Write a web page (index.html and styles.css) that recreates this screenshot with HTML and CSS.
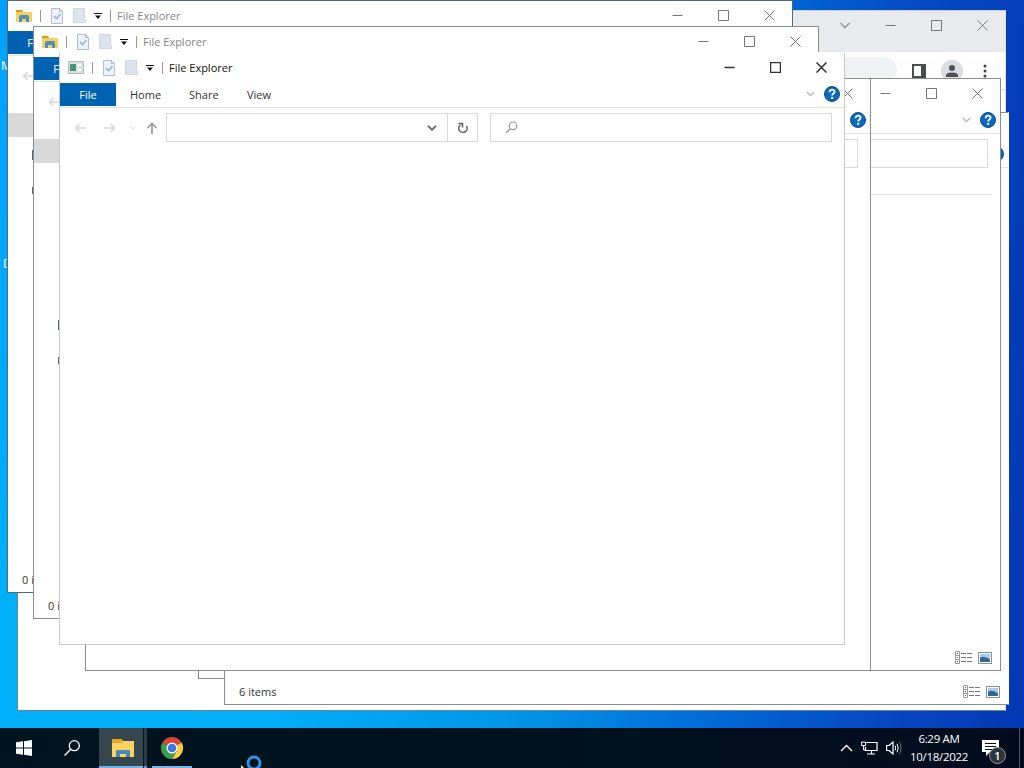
FILE: index.html
```html
<!DOCTYPE html>
<html lang="en">
<head>
  <meta charset="UTF-8">
  <title>Desktop</title>
  <link rel="stylesheet" href="styles.css">
</head>
<body>
  <!-- shared icons -->
  <svg class="defs">
    <symbol id="folder" viewBox="0 0 16 14">
      <path d="M0 1h6l1 2h9v10H0z" fill="#f8d05c"/>
      <path d="M0 1h6l1 2H0z" fill="#d39a20"/>
      <path d="M3 13V8q0-2 2-2h6q2 0 2 2v5h-3v-3H6v3z" fill="#4a8fc6"/>
    </symbol>
    <symbol id="app" viewBox="0 0 16 13">
      <rect x=".5" y=".5" width="15" height="12" fill="#dde1e1" stroke="#b3b9b9"/>
      <rect x="2" y="3" width="6" height="7" fill="#4b9276"/>
      <path d="M10 3h3v2h-2v3h2v2h-3z" fill="#fff"/>
    </symbol>
    <symbol id="props" viewBox="0 0 12 16">
      <path d="M.5.5h8l3 3v12H.5z" fill="#eef2fb" stroke="#b4bfd2"/>
      <path d="M8.500.5v3h3" fill="none" stroke="#b4bfd2"/>
      <path d="M3 8l2.500 2.500L9.500 6" fill="none" stroke="#9cb0d8" stroke-width="1.600"/>
    </symbol>
    <symbol id="newfolder" viewBox="0 0 13 15">
      <path d="M.5.5h11v10l1 1v3H.5z" fill="#dce3ef" stroke="#d0d7e2"/>
    </symbol>
    <symbol id="more" viewBox="0 0 8 6">
      <path d="M0 .5h8" stroke="#111"/><path d="M1 2.500h6L4 6z" fill="#111"/>
    </symbol>
    <symbol id="min" viewBox="0 0 11 11"><path d="M.5 5.500h10"/></symbol>
    <symbol id="max" viewBox="0 0 11 11"><path d="M.5.5h10v10H.5z"/></symbol>
    <symbol id="close" viewBox="0 0 11 11"><path d="M.5.5l10 10M10.500.5l-10 10"/></symbol>
    <symbol id="chev" viewBox="0 0 10 6"><path d="M1 .8l4 4 4-4"/></symbol>
    <symbol id="arrow" viewBox="0 0 12 10"><path d="M12 5H1.500M5.500 1l-4 4 4 4"/></symbol>
    <symbol id="help" viewBox="0 0 16 16">
      <circle cx="8" cy="8" r="7.500" fill="#0d68b8" stroke="#0a4f92"/>
      <path d="M5.600 6.200c0-3.400 5-3.200 5-.5 0 1.800-2.400 1.700-2.400 3.700" fill="none" stroke="#fff" stroke-width="1.800"/>
      <rect x="7.200" y="10.800" width="2" height="2" fill="#fff"/>
    </symbol>
    <symbol id="details" viewBox="0 0 17 13">
      <path d="M.5.5h4v12h-4zM.5 4.500h4M.5 8.500h4" fill="none" stroke="#999"/>
      <path d="M2 2.500h1M2 6.500h1M2 10.500h1" stroke="#555"/>
      <path d="M6 2.500h11M6 6.500h11M6 10.500h11" stroke="#777" stroke-dasharray="5 1"/>
    </symbol>
    <symbol id="thumbs" viewBox="0 0 14 12">
      <rect x=".5" y=".5" width="13" height="11" fill="#fff" stroke="#8393a3"/>
      <rect x="2" y="2" width="10" height="8" fill="#a9cbed"/>
      <path d="M2 5.500q5-2 10 2V10H2z" fill="#37688c"/>
    </symbol>
  </svg>

  <div class="desktop">
    <span class="desk-label label-m">M</span>
    <span class="desk-label label-d">D</span>

    <div class="window chrome">
      <div class="chrome-title">
        <svg class="chrome-chev" width="12" height="7"><use href="#chev"/></svg>
        <div class="controls">
          <span><svg><use href="#min"/></svg></span>
          <span><svg><use href="#max"/></svg></span>
          <span><svg><use href="#close"/></svg></span>
        </div>
      </div>
      <div class="chrome-bar">
        <div class="omnibox"></div>
        <svg class="panel" width="14" height="14" viewBox="0 0 14 14"><path d="M1 1h12v12H1z" fill="#fff" stroke="#4a4c50" stroke-width="2"/><path d="M9 0h5v14H9z" fill="#4a4c50"/></svg>
        <svg class="avatar" width="22" height="22" viewBox="0 0 22 22"><circle cx="11" cy="11" r="11" fill="#dadde1"/><circle cx="11" cy="8" r="3" fill="#4d5156"/><path d="M5 17v-1.500q0-3 6-3t6 3V17z" fill="#4d5156"/></svg>
        <svg class="menu" width="4" height="14" viewBox="0 0 4 14"><g fill="#444"><circle cx="2" cy="2" r="1.500"/><circle cx="2" cy="7" r="1.500"/><circle cx="2" cy="12" r="1.500"/></g></svg>
      </div>
    </div>

    <div id="windows"></div>

    <div class="taskbar">
      <div class="task"><svg width="16" height="16" viewBox="0 0 16 16"><path d="M0 2.300l7-1v6.200H0zM8 1.200L16 0v7.500H8zM0 8.500h7v6.200l-7-1zM8 8.500h8V16l-8-1.200z" fill="#fff"/></svg></div>
      <div class="task"><svg width="16" height="16" viewBox="0 0 16 16"><path d="M6.500 9.500L.5 15.500" stroke="#fff" stroke-width="1.400"/><circle cx="10.300" cy="5.700" r="5" fill="none" stroke="#fff" stroke-width="1.300"/></svg></div>
      <div class="task active"><svg width="22" height="19" viewBox="0 0 22 19"><path d="M0 0h9l2 2h11v16H0z" fill="#fad35e"/><path d="M0 0h9l2 2-2 2H0z" fill="#e3a829"/><path d="M4 18v-6q0-1 1-1h12q1 0 1 1v6h-4v-3H8v3z" fill="#4489bd"/></svg></div>
      <div class="stack"></div>
      <div class="task running"><svg width="22" height="22" viewBox="0 0 22 22">
        <path d="M11 11L1.470 5.500A11 11 0 0 1 20.530 5.500z" fill="#dc4437"/>
        <path d="M11 11l9.530-5.500A11 11 0 0 1 11 22l4.500-8z" fill="#fbcd43"/>
        <path d="M1.470 5.500A11 11 0 0 0 11 22l4.700-8.300L11 11z" fill="#3b9c4e"/>
        <circle cx="11" cy="11" r="5.500" fill="#fff"/><circle cx="11" cy="11" r="4.300" fill="#3f78e6"/></svg></div>
      <div class="tray">
        <svg width="13" height="8" viewBox="0 0 13 8"><path d="M1 7l5.500-5.500L12 7" fill="none" stroke="#fff" stroke-width="1.400"/></svg>
        <svg width="17" height="14" viewBox="0 0 17 14"><path d="M5 1.500h11v8H4.500V6M10.500 9.500v3M6 13h8" fill="none" stroke="#fff" stroke-width="1.200"/><path d="M.6 1.100h4v3.500h-4zM2.600 4.500V9h2" fill="none" stroke="#fff"/></svg>
        <svg width="16" height="14" viewBox="0 0 16 14"><path d="M.6 4.500H3l4-3.500v12L3 9.500H.6z" fill="none" stroke="#fff" stroke-width="1.200"/><path d="M9 4.500q1.500 2.500 0 5M11 2.800q2.600 4.200 0 8.400" fill="none" stroke="#fff"/><path d="M13.200 1q3.700 6 0 12" fill="none" stroke="#66727c"/></svg>
        <div class="clock"><div>6:29 AM</div><div>10/18/2022</div></div>
        <div class="notice">
          <svg width="17" height="16" viewBox="0 0 17 16"><path d="M0 0h17v12H8l-4 4v-4H0z" fill="#fff"/><path d="M3 3.500h11M3 6.500h11M3 9.500h8" stroke="#06101b"/></svg>
          <span class="badge">1</span>
        </div>
      </div>
      <div class="peek"></div>
    </div>

    <svg class="cursor" width="24" height="14" viewBox="0 0 24 14"><path d="M1 10v4h4z" fill="#fff"/><circle cx="14" cy="8" r="6" fill="none" stroke="#2d96e8" stroke-width="2.800"/></svg>
  </div>

  <script>
    // back to front; tabs and title only where they are not covered
    const windows = [
      { cls: "w-items0", status: "0 items" },
      { cls: "w-items6", status: "6 items", views: true },
      { cls: "w-pane", status: " ", views: true },
      { cls: "w-blank" },
      { cls: "w-first", title: "File Explorer", tabs: ["File"], status: "0 items", tree: "tree-a" },
      { cls: "w-second", title: "File Explorer", tabs: ["File"], status: "0 items", tree: "tree-b" },
      { cls: "w-front", title: "File Explorer", tabs: ["File", "Home", "Share", "View"], front: true },
    ];

    const icon = (id, w, h) => `<svg class="i-${id}" width="${w}" height="${h}"><use href="#${id}"/></svg>`;

    document.getElementById("windows").innerHTML = windows.map(w => `
      <div class="window explorer ${w.cls}">
        <div class="titlebar">
          ${w.front ? icon("app", 16, 13) : icon("folder", 16, 14)}
          <i class="sep sep-1"></i>
          ${icon("props", 12, 16)}
          ${icon("newfolder", 13, 15)}
          ${icon("more", 8, 6)}
          <i class="sep sep-2"></i>
          <span class="title">${w.title || ""}</span>
          <div class="controls">
            <span>${icon("min", 11, 11)}</span>
            <span>${icon("max", 11, 11)}</span>
            <span>${icon("close", 11, 11)}</span>
          </div>
        </div>
        <div class="ribbon">
          ${(w.tabs || []).map(t => `<span class="tab ${t.toLowerCase()}">${t}</span>`).join("")}
          <span class="ribbon-end">${icon("chev", 9, 6)}${icon("help", 16, 16)}</span>
        </div>
        <div class="nav">
          ${icon("arrow", 12, 10)}
          <svg class="forward" width="12" height="10"><use href="#arrow"/></svg>
          <svg class="recent" width="6" height="4"><use href="#chev"/></svg>
          <svg class="up" width="12" height="12" viewBox="0 0 12 12"><path d="M6 12V1.500M1.500 6L6 1.500 10.500 6"/></svg>
          <div class="address">${icon("chev", 10, 6)}</div>
          <div class="reload"><svg width="12" height="12" viewBox="0 0 12 12"><path d="M3.500 2.800A4.200 4.200 0 1 0 9.500 4M1.500 1.500h4v4" fill="none" stroke="#666" stroke-width="1.600"/></svg></div>
          <div class="search"><svg width="13" height="13" viewBox="0 0 13 13"><path d="M5 8L1 12" stroke="#999" stroke-width="1.300"/><circle cx="8" cy="4.800" r="3.800" fill="none" stroke="#999" stroke-width="1.200"/></svg></div>
        </div>
        <div class="content">${w.tree ? `<div class="tree ${w.tree}"><b></b><i></i><i></i></div>` : ""}</div>
        ${w.status ? `<div class="status"><span>${w.status}</span>${w.views ? icon("details", 17, 13) + icon("thumbs", 14, 12) : ""}</div>` : ""}
      </div>`).join("");
  </script>
</body>
</html>
```
FILE: styles.css
```css
* { box-sizing: border-box; }
body { margin: 0; font-family: "Open Sans", "Noto Sans", sans-serif; font-size: 11px; color: #333; }
svg { display: block; flex: none; }
.defs { position: absolute; width: 0; height: 0; }

.desktop {
  position: relative; width: 1024px; height: 768px; overflow: hidden;
  background:
    linear-gradient(180deg, rgba(0, 140, 255, .4), rgba(0, 140, 255, 0) 80%) 0 0 / 20px 100% no-repeat,
    linear-gradient(94deg, #00b0fa 0%, #00aef8 30%, #0094e8 53%, #006cd8 70%, #0648c4 86%, #0438b4 100%);
}
.desk-label { position: absolute; color: #fff; font-size: 12px; }
.label-m { left: 1px; top: 57px; }
.label-d { left: 3px; top: 255px; }

.window { position: absolute; background: #fff; }

/* browser window */
.chrome { left: 17px; top: 10px; width: 989px; height: 701px; border: 1px solid #6c8492; border-top-color: #c4d0e4; border-right-color: #dfe3ea; }
.chrome-title { display: flex; justify-content: flex-end; align-items: flex-start; height: 41px; background: #e8eaed; }
.chrome-title .controls { height: 29px; }
.chrome-chev { margin: 11px 16px 0 0; fill: none; stroke: #929599; stroke-width: 1.2; }
.chrome-bar { display: flex; align-items: center; justify-content: flex-end; height: 38px; border-bottom: 1px solid #ddd; }
.omnibox { width: 700px; height: 27px; border-radius: 14px; background: #f0f1f4; margin-right: 15px; }
.avatar { margin: 0 20px 0 15px; }
.menu { margin-right: 18px; }

/* explorer windows */
.explorer { display: flex; flex-direction: column; width: 786px; height: 593px; border: 1px solid #8d8d8d; }
.w-first { left: 7px; top: 0; border-color: #52697a; }
.w-second { left: 33px; top: 26px; }
.w-front { left: 59px; top: 52px; border-color: #fff #c9c9c9 #c9c9c9; }
.w-blank { left: 85px; top: 78px; }
.w-pane { left: 215px; top: 78px; }
.w-items6 { left: 224px; top: 112px; width: 785px; border-right-color: #fff; }
.w-items0 { left: 198px; top: 86px; }

.titlebar { display: flex; align-items: center; height: 30px; padding: 0 0 1px 8px; }
.sep { width: 1px; height: 12px; background: #999; }
.sep-1 { margin: 0 10px 0 8px; }
.i-newfolder { margin: 0 8px 0 10px; }
.sep-2 { margin: 0 6px 0 8px; }
.title { color: #858585; }
.controls { display: flex; margin-left: auto; height: 29px; }
.chrome-title .controls { margin-left: 0; }
.controls span { display: flex; align-items: center; justify-content: center; width: 46px; }
.controls svg { width: 11px; height: 11px; fill: none; stroke: #777; stroke-width: 1; }
.w-front .title { color: #111; }
.w-front .controls svg { stroke: #333; stroke-width: 1.5; }

.ribbon { display: flex; align-items: center; height: 25px; border-bottom: 1px solid #e3e3e3; }
.tab { line-height: 23px; height: 23px; margin-bottom: 1px; }
.file { width: 56px; text-align: center; color: #fff; background: #0063b1; }
.home { margin-left: 14px; width: 59px; }
.share { width: 58px; }
.ribbon-end { display: flex; align-items: center; margin: 0 4px 2px auto; gap: 9px; }
.ribbon-end .i-chev { fill: none; stroke: #b5b5b5; stroke-width: 1.5; }

.nav { display: flex; align-items: center; height: 39px; padding-left: 14px; fill: none; }
.nav svg { stroke: #d6d6d6; stroke-width: 1.4; }
.nav .forward { transform: scaleX(-1); margin: 0 14px 0 18px; }
.nav .up { stroke: #999; stroke-width: 1.7; margin: 0 8px 0 10px; }
.address, .reload, .search { display: flex; align-items: center; height: 29px; border: 1px solid #d9d9d9; }
.address { width: 282px; justify-content: flex-end; padding-right: 10px; }
.address .i-chev { stroke: #777; stroke-width: 2; }
.reload { width: 31px; margin-left: -1px; justify-content: center; }
.search { width: 342px; margin-left: 12px; padding-left: 14px; }

.content { flex: 1; }
.w-pane .content { border-top: 1px solid #e2e2e2; margin: 21px 8px 0; }
.tree { display: flex; flex-direction: column; padding-top: 18px; }
.tree b { width: 60px; height: 24px; background: #d9d9d9; }
.tree i { margin-left: 24px; width: 2px; height: 10px; background: #5b6a78; }
.tree i + i { height: 7px; }
.tree-a i { margin-top: 13px; }
.tree-a i + i { margin-top: 27px; }
.tree-b i { margin-top: 157px; }
.tree-b i + i { margin-top: 27px; }
.status { display: flex; align-items: center; height: 24px; padding: 0 8px 1px 14px; }
.status span { flex: 1; white-space: pre; }
.status .i-details { margin-right: 6px; }

/* taskbar */
.taskbar { position: absolute; left: 0; bottom: 0; width: 1024px; height: 40px; display: flex; align-items: stretch; color: #fff; background: linear-gradient(90deg, #00141f, #00121e 50%, #020b1d); }
.task { display: flex; align-items: center; justify-content: center; width: 48px; border-bottom: 2px solid transparent; padding-top: 2px; }
.active { width: 44px; margin-left: 3px; padding-left: 4px; background: #36464f; border-color: #76b4e8; }
.stack { width: 3px; margin-left: 1px; background: #2b3b45; border-bottom: 2px solid #649cc9; }
.running { width: 40px; margin-left: 5px; border-color: #76b4e8; }
.tray { display: flex; align-items: center; margin-left: auto; gap: 8px; }
.clock { width: 60px; margin-left: -1px; text-align: center; line-height: 18px; font-size: 11.500px; letter-spacing: -.3px; white-space: nowrap; }
.notice { position: relative; margin: 0 20px 0 5px; }
.badge { position: absolute; left: 7px; top: 7px; width: 17px; height: 17px; border: 1px solid #999; border-radius: 50%; background: #2b333b; font-size: 11px; font-weight: 600; line-height: 15px; text-align: center; }
.peek { width: 5px; border-left: 1px solid #4b5866; }
.cursor { position: absolute; left: 240px; top: 755px; }
```
